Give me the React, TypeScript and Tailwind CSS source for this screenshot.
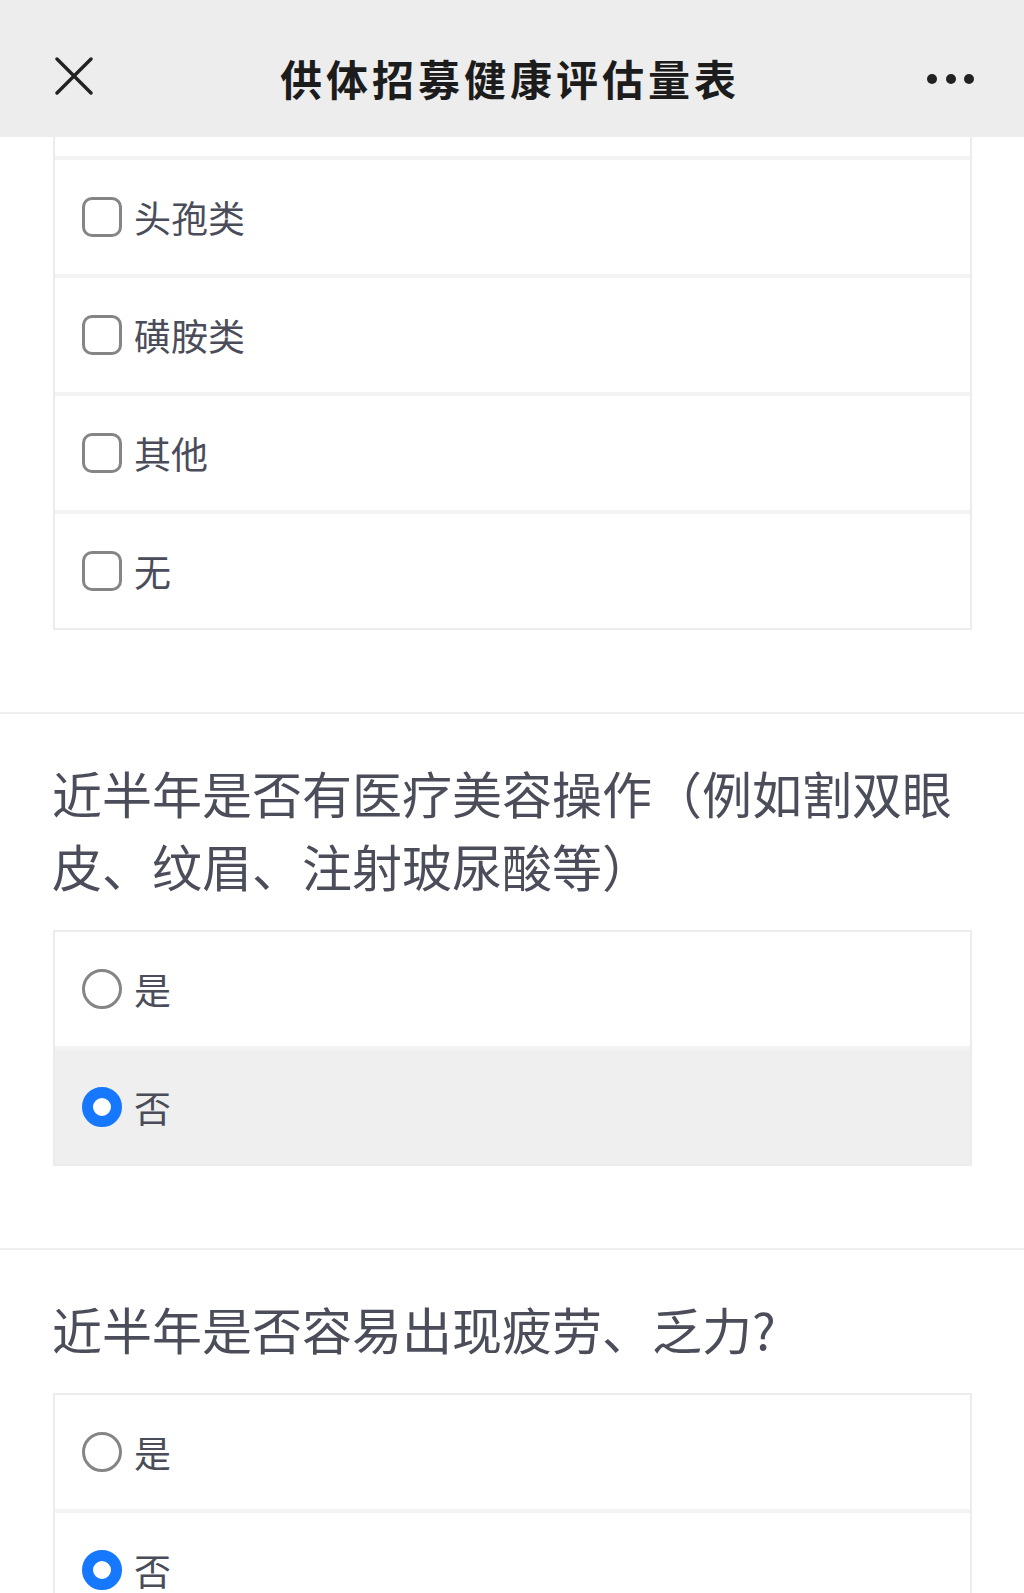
const font = { fontFamily: '"Noto Sans CJK SC", "Noto Sans", sans-serif' };

type Option = { label: string; checked?: boolean };

function CheckIcon({ type, checked }: { type: 'checkbox' | 'radio'; checked?: boolean }) {
  if (type === 'checkbox') {
    return <span className="w-[40px] h-[40px] shrink-0 rounded-[10px] border-[3px] border-[#858585] bg-white" />;
  }
  if (checked) {
    return <span className="w-[40px] h-[40px] shrink-0 rounded-full border-[11px] border-[#1677ff] bg-white" />;
  }
  return <span className="w-[40px] h-[40px] shrink-0 rounded-full border-[3px] border-[#858585] bg-white" />;
}

function OptionRow({ option, type, shaded }: { option: Option; type: 'checkbox' | 'radio'; shaded?: boolean }) {
  return (
    <div className={`h-[114px] flex items-center gap-[12px] pl-[27px] ${shaded ? 'bg-[#efefef]' : 'bg-white'}`}>
      <CheckIcon type={type} checked={option.checked} />
      <span className="text-[37px] leading-none text-[#4a4d59]">{option.label}</span>
    </div>
  );
}

function OptionCard({ options, type, shadeSelected }: { options: Option[]; type: 'checkbox' | 'radio'; shadeSelected?: boolean }) {
  return (
    <div className="ml-[53px] w-[919px] border-2 border-[#ececec] bg-[#f3f3f3] flex flex-col gap-[4px]">
      {options.map(o => (
        <OptionRow key={o.label} option={o} type={type} shaded={shadeSelected && o.checked} />
      ))}
    </div>
  );
}

function Question({ title, children }: { title: string; children: React.ReactNode }) {
  return (
    <section className="border-t-2 border-[#eeeeee] pt-[42px] pb-[82px]">
      <h2 className="pl-[52px] w-[975px] text-[50px] leading-[73px] font-normal text-[#4b4e5a]">{title}</h2>
      <div className="mt-[28px]">{children}</div>
    </section>
  );
}

export default function App() {
  return (
    <div className="w-[1024px] h-[1593px] overflow-hidden bg-white" style={font}>
      <header className="h-[137px] bg-[#ededed] flex items-center pt-[14px] pl-[55px] pr-[50px]">
        <svg width="38" height="38" viewBox="0 0 38 38" className="shrink-0">
          <path d="M2 2L36 36M36 2L2 36" stroke="#222" strokeWidth="3.4" strokeLinecap="round" />
        </svg>
        <h1 className="flex-1 text-center text-[42px] font-semibold tracking-[4px] text-[#1c1c1c] leading-none pt-[4px]">
          供体招募健康评估量表
        </h1>
        <div className="flex items-center gap-[8.5px] mt-[6px]">
          <span className="w-[10px] h-[10px] rounded-full bg-[#222]" />
          <span className="w-[10px] h-[10px] rounded-full bg-[#222]" />
          <span className="w-[10px] h-[10px] rounded-full bg-[#222]" />
        </div>
      </header>

      <div className="pb-[82px]">
        <div className="ml-[53px] w-[919px] border-x-2 border-b-2 border-[#ececec] bg-[#f3f3f3] flex flex-col gap-[4px]">
          <div className="h-[19px] bg-white" />
          {['头孢类', '磺胺类', '其他', '无'].map(label => (
            <OptionRow key={label} option={{ label }} type="checkbox" />
          ))}
        </div>
      </div>

      <Question title="近半年是否有医疗美容操作（例如割双眼皮、纹眉、注射玻尿酸等）">
        <OptionCard type="radio" shadeSelected options={[{ label: '是' }, { label: '否', checked: true }]} />
      </Question>

      <Question title="近半年是否容易出现疲劳、乏力?">
        <OptionCard type="radio" options={[{ label: '是' }, { label: '否', checked: true }]} />
      </Question>
    </div>
  );
}
